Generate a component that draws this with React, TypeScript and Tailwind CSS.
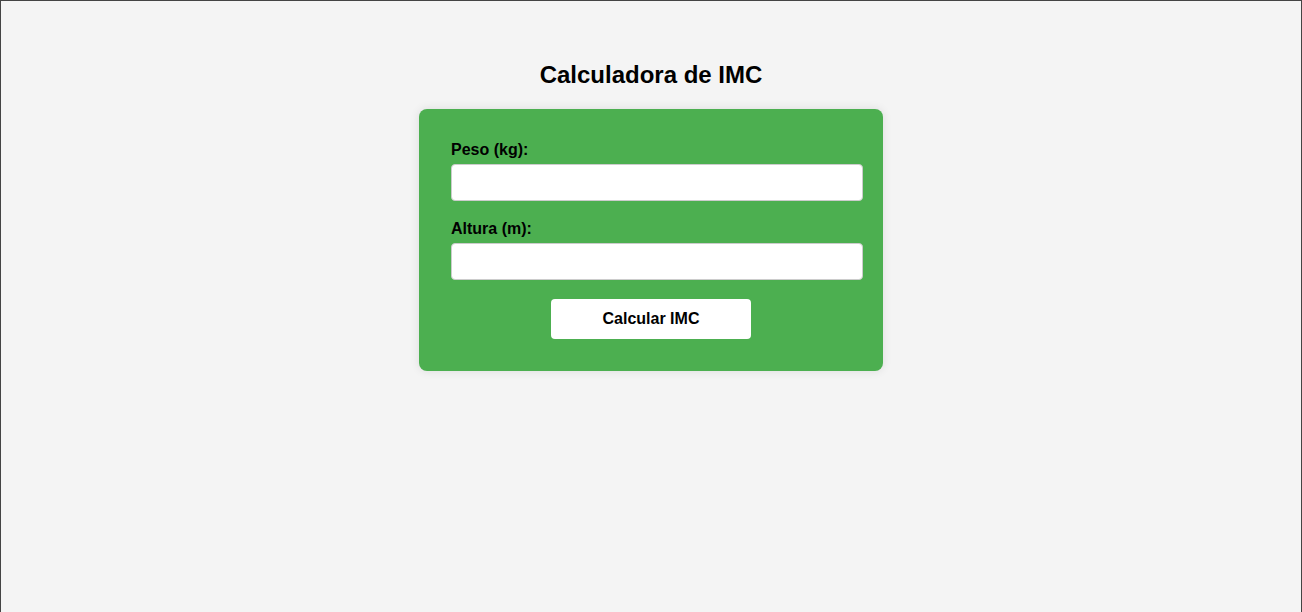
import React from 'react';

export default function App() {
  return (
    <div className="h-[620px] border border-[#444] bg-[#f4f4f4] flex flex-col items-center pt-[60px] font-['Liberation_Sans',Arial,sans-serif] text-black">
      {/* título */}
      <h1 className="text-[24px] leading-[28px] font-bold mb-[20px]">Calculadora de IMC</h1>

      {/* formulário */}
      <div className="w-[464px] bg-[#4caf50] rounded-[8px] shadow-[0_0_10px_rgba(0,0,0,0.1)] pt-[32px] pb-[32px] pl-[32px] pr-[20px]">
        <label className="block text-[16px] leading-[18px] font-bold mb-[5px]">Peso (kg):</label>
        <input type="number" className="block w-[412px] h-[37px] bg-white border border-[#ccc] rounded-[4px] px-[5px] outline-none" />

        <label className="block text-[16px] leading-[18px] font-bold mt-[19px] mb-[5px]">Altura (m):</label>
        <input type="number" className="block w-[412px] h-[37px] bg-white border border-[#ccc] rounded-[4px] px-[5px] outline-none" />

        <div className="w-[400px] flex justify-center mt-[19px]">
          <button className="w-[200px] h-[40px] bg-white rounded-[4px] text-[16px] font-bold">Calcular IMC</button>
        </div>
      </div>
    </div>
  );
}
